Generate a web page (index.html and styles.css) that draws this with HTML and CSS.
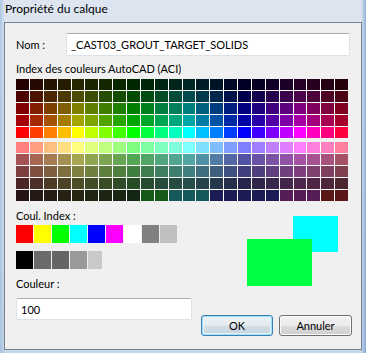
FILE: index.html
```html
<!DOCTYPE html>
<html lang="fr">
<head>
  <meta charset="UTF-8" />
  <title>Propriété du calque</title>
  <link rel="stylesheet" href="styles.css">
</head>
<body>
  <div class="window">
    <div class="titlebar">Propriété du calque</div>
    <div class="client">
      <div class="name-row">
        <label class="label name-label" for="layer-name">Nom :</label>
        <input class="field name-field" id="layer-name" type="text" value="_CAST03_GROUT_TARGET_SOLIDS" />
      </div>

      <div class="label aci-title">Index des couleurs AutoCAD (ACI)</div>
      <div class="aci-grid" id="aci-top"></div>
      <div class="aci-grid lower" id="aci-bottom"></div>

      <div class="bottom">
        <div class="left">
          <div class="label index-title">Coul. Index :</div>
          <div class="swatches">
            <span class="sw red"></span>
            <span class="sw yellow"></span>
            <span class="sw green"></span>
            <span class="sw cyan"></span>
            <span class="sw blue"></span>
            <span class="sw magenta"></span>
            <span class="sw white"></span>
            <span class="sw gray"></span>
            <span class="sw silver"></span>
          </div>
          <div class="swatches greys">
            <span class="sw g0"></span>
            <span class="sw g1"></span>
            <span class="sw g2"></span>
            <span class="sw g3"></span>
            <span class="sw g4"></span>
          </div>
          <div class="label color-title">Couleur :</div>
          <input class="field color-field" type="text" value="100" />
        </div>
        <div class="right">
          <div class="preview">
            <div class="old-color"></div>
            <div class="new-color"></div>
          </div>
          <div class="buttons">
            <button class="btn default">OK</button>
            <button class="btn">Annuler</button>
          </div>
        </div>
      </div>
    </div>
  </div>

  <script>
    // AutoCAD ACI palette, colours 10 to 249
    const up = [0, 63, 127, 191];
    const down = [255, 191, 127, 63];
    const shades = [1, 165 / 255, 127 / 255, 76 / 255, 38 / 255];

    function hueColor(i) {
      const seg = Math.floor(i / 4), f = i % 4;
      if (seg === 0) return [255, up[f], 0];
      if (seg === 1) return [down[f], 255, 0];
      if (seg === 2) return [0, 255, up[f]];
      if (seg === 3) return [0, down[f], 255];
      if (seg === 4) return [up[f], 0, 255];
      return [255, 0, down[f]];
    }

    function pastel(c) {
      return c.map(v => Math.floor((v + 255) / 2));
    }

    function rgb(c, k) {
      return `rgb(${c.map(v => Math.round(v * k)).join(",")})`;
    }

    // the last row of the screenshot does not follow the formula everywhere
    const lastRow = {
      9: "#175a17", 10: "#175a17", 11: "#16595a", 12: "#16595a", 13: "#16595a",
      14: "#1c1c55", 15: "#1c1c55", 16: "#1c1c55", 17: "#1c1c55", 18: "#1c1c55",
      19: "#551c55", 20: "#551c55", 21: "#551c55", 22: "#5a1717", 23: "#5a1717"
    };

    const upperGrid = document.querySelector("#aci-top");
    const lowerGrid = document.querySelector("#aci-bottom");

    [4, 3, 2, 1, 0].forEach(s => {
      for (let i = 0; i < 24; i++) {
        const cell = document.createElement("span");
        cell.className = "cell";
        cell.style.background = rgb(hueColor(i), shades[s]);
        upperGrid.appendChild(cell);
      }
    });

    [0, 1, 2, 3, 4].forEach(s => {
      for (let i = 0; i < 24; i++) {
        const cell = document.createElement("span");
        cell.className = "cell";
        cell.style.background = (s === 4 && lastRow[i]) ? lastRow[i] : rgb(pastel(hueColor(i)), shades[s]);
        lowerGrid.appendChild(cell);
      }
    });
  </script>
</body>
</html>
```

FILE: styles.css
```css
body {
  margin: 0;
  font-family: Lato, "Noto Sans", sans-serif;
  font-size: 11px;
  color: #000;
}
.window {
  width: 366px;
  height: 353px;
  box-sizing: border-box;
  padding: 0 4px 3px 4px;
  display: flex;
  flex-direction: column;
  background:
    linear-gradient(to right, rgba(160, 190, 222, 0.8) 0, rgba(200, 216, 234, 0) 5px, rgba(200, 216, 234, 0) 361px, rgba(90, 140, 200, 0.6) 366px),
    linear-gradient(#dde6f0, #d6e1ee 60%, #c6d7ea);
}
.titlebar {
  height: 22px;
  line-height: 17px;
  padding-left: 1px;
  font-size: 12px;
  white-space: nowrap;
}
.client {
  flex: 1;
  border: 1px solid #76818d;
  background: #f0f0f0;
  padding: 10px 11px 0;
}
.label {
  line-height: 16px;
  white-space: nowrap;
}
.name-row {
  display: flex;
  align-items: center;
  height: 23px;
}
.name-label {
  width: 50px;
  flex: none;
}
.field {
  box-sizing: border-box;
  font-family: inherit;
  font-size: 11px;
  color: #000;
  background: #fff;
  border: 1px solid #dde2e8;
  border-top-color: #abadb3;
  border-radius: 2px;
  padding: 0 4px;
  outline: none;
}
.name-field {
  flex: 1;
  height: 23px;
  min-width: 0;
}
.aci-title {
  margin-top: 5px;
  margin-bottom: 2px;
}
.aci-grid {
  width: 332px;
  display: grid;
  grid-template-columns: repeat(24, 1fr);
  grid-auto-rows: 11px;
  gap: 1px;
  background: #fff;
}
.aci-grid.lower {
  margin-top: 4px;
}
.cell {
  display: block;
}
.bottom {
  display: flex;
}
.left {
  width: 176px;
  flex: none;
}
.index-title {
  margin-top: 7px;
  margin-bottom: 1px;
}
.swatches {
  display: flex;
  gap: 1px;
  height: 18px;
}
.swatches.greys {
  margin-top: 8px;
}
.sw {
  width: 17px;
  flex: none;
}
.red { background: #ff0000; }
.yellow { background: #ffff00; }
.green { background: #00ff00; }
.cyan { background: #00ffff; }
.blue { background: #0000ff; }
.magenta { background: #ff00ff; }
.white { background: #ffffff; }
.gray { background: #808080; }
.silver { background: #c0c0c0; }
.g0 { background: #000000; }
.g1 { background: #6a6a6a; }
.g2 { background: #656565; }
.g3 { background: #999999; }
.g4 { background: #c9c9c9; width: 14px; }
.color-title {
  margin-top: 7px;
}
.color-field {
  display: block;
  width: 176px;
  height: 22px;
  margin-top: 6px;
}
.right {
  flex: 1;
  display: flex;
  flex-direction: column;
}
.preview {
  position: relative;
  width: 91px;
  height: 70px;
  margin: 15px 0 0 55px;
}
.old-color {
  position: absolute;
  left: 46px;
  top: 0;
  width: 45px;
  height: 36px;
  background: #00ffff;
}
.new-color {
  position: absolute;
  left: 0;
  top: 23px;
  width: 65px;
  height: 47px;
  background: #00ff40;
}
.buttons {
  display: flex;
  justify-content: flex-end;
  gap: 6px;
  margin: 29px -2px 0 0;
}
.btn {
  width: 73px;
  height: 21px;
  padding: 0;
  font-family: inherit;
  font-size: 11px;
  color: #000;
  border: 1px solid #707070;
  border-radius: 3px;
  box-shadow: inset 0 0 0 1px #fbfbfb;
  background: linear-gradient(#f2f2f2 0%, #ebebeb 50%, #dddddd 51%, #cfcfcf 100%);
}
.btn.default {
  width: 72px;
  border-color: #3c7fb1;
  box-shadow: inset 0 0 0 1px #9ee0f8, inset 0 0 0 2px #e4f3fb;
  background: linear-gradient(#eef3f6 0%, #e3eaef 50%, #d3dde5 51%, #c9d4de 100%);
}
```
